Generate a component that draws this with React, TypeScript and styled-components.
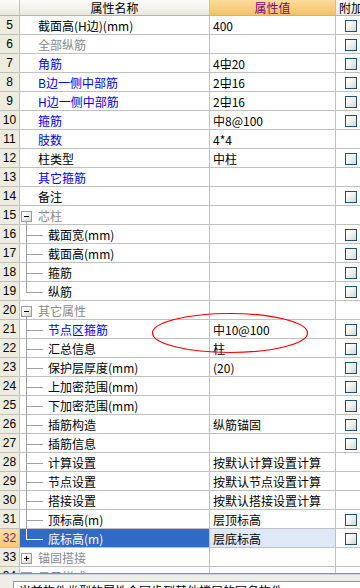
import React from "react";
import styled, { createGlobalStyle, css } from "styled-components";

const GlobalStyle = createGlobalStyle`
  html, body {
    margin: 0;
    padding: 0;
  }
  body {
    width: 360px;
    height: 588px;
    overflow: hidden;
    background: #ffffff;
    font-family: "Noto Sans CJK SC", "Liberation Sans", sans-serif;
    font-size: 12px;
    color: #000;
  }
`;

const GRID = "#c0c0c0";
const COLS = "20px 190px 126px 60px";

const Window = styled.div`
  position: relative;
  width: 360px;
  height: 588px;
  display: flex;
  flex-direction: column;
  overflow: hidden;
`;

const Table = styled.div`
  height: 573px;
  flex: none;
  display: flex;
  flex-direction: column;
  overflow: hidden;
`;

const HeaderRow = styled.div`
  display: grid;
  grid-template-columns: ${COLS};
  height: 16px;
  flex: none;
`;

const HeadCell = styled.div<{ $tone?: "plain" | "value" }>`
  box-sizing: border-box;
  border-right: 1px solid ${GRID};
  border-bottom: 1px solid #b8b5a6;
  line-height: 15px;
  font-size: 12px;
  text-align: center;
  white-space: nowrap;
  background: linear-gradient(#fdfdfb, #eae8dc);
  ${(p) =>
    p.$tone === "value" &&
    css`
      background: linear-gradient(#fcdc9e, #f2c263);
      color: #800080;
    `}
`;

const HeadExtra = styled(HeadCell)`
  text-align: left;
  padding-left: 3px;
  border-right: none;
  overflow: hidden;
`;

const Row = styled.div`
  display: grid;
  grid-template-columns: ${COLS};
  height: 19px;
  flex: none;
`;

const Cell = styled.div`
  box-sizing: border-box;
  height: 19px;
  border-right: 1px solid ${GRID};
  border-bottom: 1px solid ${GRID};
  line-height: 18px;
  white-space: nowrap;
  overflow: visible;
`;

const NumCell = styled(Cell)<{ $active?: boolean }>`
  font-family: "Liberation Sans", sans-serif;
  font-size: 12px;
  text-align: center;
  background: #eeecdf;
  color: #000;
  ${(p) =>
    p.$active &&
    css`
      background: linear-gradient(#fde0a4, #f7c874);
      color: #7a1f8c;
    `}
`;

const toneColors = {
  black: "#000000",
  blue: "#0000ff",
  grey: "#8a8a8a",
};

type Tone = keyof typeof toneColors;

const NameCell = styled(Cell)<{ $tone: Tone; $indent: number; $active?: boolean }>`
  display: flex;
  align-items: flex-start;
  padding-left: ${(p) => p.$indent}px;
  color: ${(p) => (p.$active ? "#ffffff" : toneColors[p.$tone])};
  background: ${(p) => (p.$active ? "#316ac5" : "#ffffff")};
`;

const Label = styled.span<{ $gap?: number }>`
  margin-left: ${(p) => p.$gap ?? 0}px;
  padding-top: 1px;
  line-height: 17px;
`;

const ValueCell = styled(Cell)<{ $active?: boolean }>`
  padding-left: 3px;
  padding-top: 1px;
  line-height: 17px;
  overflow: hidden;
  background: ${(p) => (p.$active ? "#dfe8f6" : "#ffffff")};
`;

const ExtraCell = styled(Cell)`
  border-right: none;
  padding-left: 9px;
  padding-top: 4px;
`;

const CheckBox = styled.span`
  display: block;
  box-sizing: border-box;
  width: 12px;
  height: 12px;
  border: 1px solid #1c5180;
  background: linear-gradient(135deg, #ffffff 20%, #d6d5cc);
`;

const Rebar = styled.span<{ $grade: "A" | "C" }>`
  position: relative;
  display: inline-block;
  ${(p) =>
    p.$grade === "C" &&
    css`
      &::after {
        content: "";
        position: absolute;
        left: 2px;
        right: 2px;
        bottom: 3px;
        height: 1px;
        background: currentColor;
      }
    `}
`;

const Connector = styled.svg`
  flex: none;
  display: block;
  overflow: visible;
`;

const Divider = styled.div`
  height: 2px;
  flex: none;
  background: linear-gradient(#7f93ad 50%, #c9d3e0 50%);
`;

const StatusPanel = styled.div`
  flex: 1;
  background: #efeee6;
  padding: 6px 0 0 13px;
  overflow: hidden;
`;

const StatusBox = styled.div`
  height: 20px;
  background: #ffffff;
  border: 1px solid #8a96a8;
  border-right: none;
  padding-left: 5px;
  line-height: 18px;
  white-space: nowrap;
  overflow: hidden;
`;

const Marker = styled.svg`
  position: absolute;
  left: 151px;
  top: 312px;
  pointer-events: none;
`;

type Kind = "top" | "group" | "child";

interface Item {
  n: number;
  name: string;
  kind: Kind;
  tone?: Tone;
  value?: React.ReactNode;
  check?: boolean;
  last?: boolean;
  open?: boolean;
  active?: boolean;
}

const bar = (count: string, grade: "A" | "C", rest: string) => (
  <>
    {count}
    <Rebar $grade={grade}>中</Rebar>
    {rest}
  </>
);

const items: Item[] = [
  { n: 5, name: "截面高(H边)(mm)", kind: "top", value: "400", check: true },
  { n: 6, name: "全部纵筋", kind: "top", tone: "grey", check: true },
  { n: 7, name: "角筋", kind: "top", tone: "blue", value: bar("4", "C", "20"), check: true },
  { n: 8, name: "B边一侧中部筋", kind: "top", tone: "blue", value: bar("2", "C", "16"), check: true },
  { n: 9, name: "H边一侧中部筋", kind: "top", tone: "blue", value: bar("2", "C", "16"), check: true },
  { n: 10, name: "箍筋", kind: "top", tone: "blue", value: bar("", "A", "8@100"), check: true },
  { n: 11, name: "肢数", kind: "top", tone: "blue", value: "4*4" },
  { n: 12, name: "柱类型", kind: "top", value: "中柱", check: true },
  { n: 13, name: "其它箍筋", kind: "top", tone: "blue" },
  { n: 14, name: "备注", kind: "top", check: true },
  { n: 15, name: "芯柱", kind: "group", tone: "grey", open: true },
  { n: 16, name: "截面宽(mm)", kind: "child", check: true },
  { n: 17, name: "截面高(mm)", kind: "child", check: true },
  { n: 18, name: "箍筋", kind: "child", check: true },
  { n: 19, name: "纵筋", kind: "child", check: true, last: true },
  { n: 20, name: "其它属性", kind: "group", tone: "grey", open: true },
  { n: 21, name: "节点区箍筋", kind: "child", tone: "blue", value: bar(" ", "A", "10@100"), check: true },
  { n: 22, name: "汇总信息", kind: "child", value: "柱", check: true },
  { n: 23, name: "保护层厚度(mm)", kind: "child", value: " (20)", check: true },
  { n: 24, name: "上加密范围(mm)", kind: "child", check: true },
  { n: 25, name: "下加密范围(mm)", kind: "child", check: true },
  { n: 26, name: "插筋构造", kind: "child", value: "纵筋锚固", check: true },
  { n: 27, name: "插筋信息", kind: "child", check: true },
  { n: 28, name: "计算设置", kind: "child", value: "按默认计算设置计算" },
  { n: 29, name: "节点设置", kind: "child", value: "按默认节点设置计算" },
  { n: 30, name: "搭接设置", kind: "child", value: "按默认搭接设置计算" },
  { n: 31, name: "顶标高(m)", kind: "child", value: "层顶标高", check: true },
  { n: 32, name: "底标高(m)", kind: "child", value: "层底标高", check: true, last: true, active: true },
  { n: 33, name: "锚固搭接", kind: "group", tone: "grey" },
  { n: 34, name: "显示样式", kind: "group", tone: "grey" },
];

function Branch({ last, active }: { last?: boolean; active?: boolean }) {
  const stroke = active ? "#ffffff" : "#a0a0a0";
  return (
    <Connector width={24} height={19} viewBox="0 0 24 19">
      <line x1={6.5} y1={0} x2={6.5} y2={last ? 10.5 : 19} stroke={stroke} />
      <line x1={6} y1={10.5} x2={23} y2={10.5} stroke={stroke} />
    </Connector>
  );
}

function Expander({ open }: { open?: boolean }) {
  return (
    <Connector width={14} height={19} viewBox="0 0 14 19">
      <defs>
        <linearGradient id="exp" x1="0" y1="0" x2="1" y2="1">
          <stop offset="0.2" stopColor="#ffffff" />
          <stop offset="1" stopColor="#d4d3cb" />
        </linearGradient>
      </defs>
      <rect x={1.5} y={5.5} width={10} height={10} fill="url(#exp)" stroke="#9c9c9c" />
      <line x1={4} y1={10.5} x2={9} y2={10.5} stroke="#000" />
      {!open && <line x1={6.5} y1={8} x2={6.5} y2={13} stroke="#000" />}
      {open && <line x1={6.5} y1={16} x2={6.5} y2={19} stroke="#a0a0a0" />}
    </Connector>
  );
}

function NameContent({ item }: { item: Item }) {
  if (item.kind === "group") {
    return (
      <>
        <Expander open={item.open} />
        <Label $gap={4}>{item.name}</Label>
      </>
    );
  }
  if (item.kind === "child") {
    return (
      <>
        <Branch last={item.last} active={item.active} />
        <Label $gap={4}>{item.name}</Label>
      </>
    );
  }
  return <Label>{item.name}</Label>;
}

export default function App() {
  return (
    <Window>
      <GlobalStyle />
      <Table>
        <HeaderRow>
          <HeadCell />
          <HeadCell>属性名称</HeadCell>
          <HeadCell $tone="value">属性值</HeadCell>
          <HeadExtra>附加信息</HeadExtra>
        </HeaderRow>
        {items.map((item) => (
          <Row key={item.n}>
            <NumCell $active={item.active}>{item.n}</NumCell>
            <NameCell
              $tone={item.tone ?? "black"}
              $indent={item.kind === "top" ? 18 : 0}
              $active={item.active}
            >
              <NameContent item={item} />
            </NameCell>
            <ValueCell $active={item.active}>{item.value}</ValueCell>
            <ExtraCell>{item.check && <CheckBox />}</ExtraCell>
          </Row>
        ))}
      </Table>
      <Divider />
      <StatusPanel>
        <StatusBox>当前构件类型的属性会同步到其他楼层的同名构件</StatusBox>
      </StatusPanel>
      <Marker width={158} height={42} viewBox="0 0 158 42">
        <ellipse cx={79} cy={21} rx={77.5} ry={19.5} fill="none" stroke="#ff0000" strokeWidth={1.2} />
      </Marker>
    </Window>
  );
}
